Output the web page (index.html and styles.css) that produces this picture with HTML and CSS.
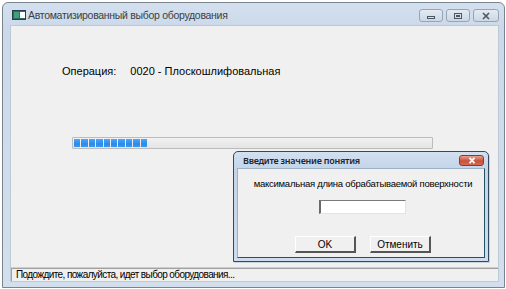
FILE: index.html
```html
<!DOCTYPE html>
<html>
<head>
<meta charset="utf-8">
<link rel="stylesheet" href="styles.css">
</head>
<body>
<div class="window">
  <div class="titlebar">
    <svg class="app-icon" width="14" height="10" viewBox="0 0 14 10">
      <rect x="0.5" y="0.5" width="13" height="9" fill="#2f6f5e" stroke="#2a3f4d"/>
      <rect x="8" y="2" width="5" height="6" fill="#ffffff"/>
      <rect x="2" y="2" width="5" height="6" fill="#3fa07a"/>
    </svg>
    <span class="title">Автоматизированный выбор оборудования</span>
    <div class="caption-buttons">
      <div class="cbtn"><svg width="10" height="8" viewBox="0 0 10 8"><rect x="1.5" y="4.5" width="7" height="2" fill="#d8dde3" stroke="#4b5563"/></svg></div>
      <div class="cbtn"><svg width="10" height="8" viewBox="0 0 10 8"><rect x="1.5" y="1.5" width="7" height="5" fill="none" stroke="#4b5563"/><rect x="3" y="3" width="4" height="2" fill="#4b5563"/></svg></div>
      <div class="cbtn"><svg width="10" height="8" viewBox="0 0 10 8"><path d="M2 1 L8 7 M8 1 L2 7" stroke="#4b5563" stroke-width="1.6"/></svg></div>
    </div>
  </div>
  <div class="client">
    <div class="content">
      <div class="operation">
        <span class="op-label">Операция:</span>
        <span class="op-value">0020 - Плоскошлифовальная</span>
      </div>
      <div class="progress">
        <span class="blk"></span><span class="blk"></span><span class="blk"></span><span class="blk"></span><span class="blk"></span><span class="blk"></span><span class="blk"></span><span class="blk"></span><span class="blk"></span><span class="blk"></span>
      </div>
    </div>
    <div class="statusbar">
      <div class="status-panel">Подождите, пожалуйста, идет выбор оборудования...</div>
    </div>
  </div>
</div>

<div class="dialog">
  <div class="dlg-title">
    <span class="dlg-caption">Введите значение понятия</span>
    <div class="dlg-close"><svg width="10" height="7" viewBox="0 0 10 7"><path d="M2.5 0.8 L7.5 6.2 M7.5 0.8 L2.5 6.2" stroke="#ffffff" stroke-width="1.8"/></svg></div>
  </div>
  <div class="dlg-client">
    <div class="dlg-label">максимальная длина обрабатываемой поверхности</div>
    <div class="dlg-input"></div>
    <div class="dlg-buttons">
      <div class="btn">OK</div>
      <div class="btn">Отменить</div>
    </div>
  </div>
</div>
</body>
</html>
```
FILE: styles.css
```css
html, body {
  margin: 0;
  padding: 0;
}
body {
  width: 506px;
  height: 289px;
  background: #ffffff;
  position: relative;
  overflow: hidden;
  font-family: "Liberation Sans", Arial, sans-serif;
}
.window {
  box-sizing: border-box;
  margin: 2px 1px 0 2px;
  height: 286px;
  border: 1px solid #7a8490;
  border-radius: 6px 6px 0 0;
  background: linear-gradient(to bottom, #d4e0ee 0px, #cbd9ea 24px, #d3dfec 100%);
  display: flex;
  flex-direction: column;
  padding: 0 5px 5px 7px;
}
.titlebar {
  height: 22px;
  display: flex;
  align-items: center;
  flex-shrink: 0;
}
.app-icon {
  margin-left: 2px;
  margin-top: 1px;
}
.title {
  margin-left: 2px;
  font-family: "Liberation Sans", sans-serif;
  font-size: 10.5px;
  letter-spacing: -0.3px;
  color: #3a3f45;
  margin-top: 1px;
}
.caption-buttons {
  margin-left: auto;
  display: flex;
  gap: 3px;
  margin-top: 6px;
  align-self: flex-start;
}
.cbtn {
  box-sizing: border-box;
  width: 24px;
  height: 13px;
  border: 1px solid #97a4b3;
  border-radius: 3px;
  background: linear-gradient(to bottom, #e3eaf2, #ccd7e4);
  display: flex;
  align-items: center;
  justify-content: center;
}
.cbtn:last-child { width: 26px; }
.client {
  flex: 1;
  background: #f0f0f0;
  border: 1px solid #bccad8;
  display: flex;
  flex-direction: column;
}
.content {
  flex: 1;
  padding: 38px 0 0 51px;
}
.operation {
  font-size: 11px;
  color: #000;
  display: flex;
  gap: 14px;
  height: 14px;
  align-items: center;
}
.progress {
  box-sizing: border-box;
  margin: 59px 0 0 10px;
  width: 361px;
  height: 12px;
  border: 1px solid #bcbcbc;
  border-radius: 1px;
  background: linear-gradient(to bottom, #f2f2f2, #e4e4e4);
  display: flex;
  align-items: center;
  padding: 0 1px;
  gap: 1px;
}
.blk {
  width: 6.4px;
  height: 8px;
  background: linear-gradient(to bottom, #4aa6ff, #2b8be8 60%, #3c98f2);
}
.statusbar {
  height: 13px;
  border-top: 1px solid #d9c9c9;
  display: flex;
}
.status-panel {
  flex: 1;
  box-sizing: border-box;
  border-left: 1px solid #a0a0a0;
  border-top: 1px solid #a0a0a0;
  font-size: 10px;
  letter-spacing: -0.6px;
  line-height: 12px;
  padding-left: 4px;
  color: #000;
  white-space: nowrap;
}
.dialog {
  position: absolute;
  left: 233px;
  top: 151px;
  width: 256px;
  height: 111px;
  box-sizing: border-box;
  border: 1px solid #34495e;
  border-radius: 5px 5px 0 0;
  background: linear-gradient(to bottom, #d2e0ef, #c3d4e9 18px, #cddcee 100%);
  display: flex;
  flex-direction: column;
  padding: 0 3px 3px 3px;
  box-shadow: 1px 1px 0 #c8d4dc;
}
.dlg-title {
  height: 16px;
  display: flex;
  align-items: center;
  flex-shrink: 0;
}
.dlg-caption {
  margin-left: 6px;
  font-family: "Noto Sans", sans-serif;
  font-size: 9px;
  font-weight: 600;
  letter-spacing: -0.25px;
  color: #1b2530;
}
.dlg-close {
  margin-left: auto;
  margin-right: 1px;
  width: 25px;
  height: 11px;
  box-sizing: border-box;
  border: 1px solid #8c3a2e;
  border-radius: 3px;
  background: linear-gradient(to bottom, #e8a08f, #c9513b 55%, #d86a4f);
  display: flex;
  align-items: center;
  justify-content: center;
}
.dlg-client {
  flex: 1;
  background: #f0f0f0;
  border: 1px solid #9eb2c6;
  border-right-color: #22545e;
  border-bottom-color: #22545e;
  display: flex;
  flex-direction: column;
  align-items: center;
}
.dlg-label {
  margin-top: 9px;
  margin-left: 4px;
  font-size: 9.5px;
  letter-spacing: -0.25px;
  white-space: nowrap;
  color: #000;
}
.dlg-input {
  margin-top: 11px;
  margin-left: 2px;
  width: 87px;
  height: 14px;
  box-sizing: border-box;
  background: #fff;
  border-top: 1px solid #7a7a7a;
  border-left: 2px solid #6a6a6a;
  border-right: 1px solid #e3e3e3;
  border-bottom: 1px solid #e3e3e3;
}
.dlg-buttons {
  margin-top: 22px;
  display: flex;
  gap: 14px;
  margin-left: 4px;
}
.btn {
  box-sizing: border-box;
  width: 61px;
  height: 17px;
  background: #f0f0f0;
  border-top: 1px solid #ffffff;
  border-left: 1px solid #ffffff;
  border-right: 2px solid #555;
  border-bottom: 2px solid #555;
  font-size: 10px;
  display: flex;
  align-items: center;
  justify-content: center;
  color: #000;
}
```
